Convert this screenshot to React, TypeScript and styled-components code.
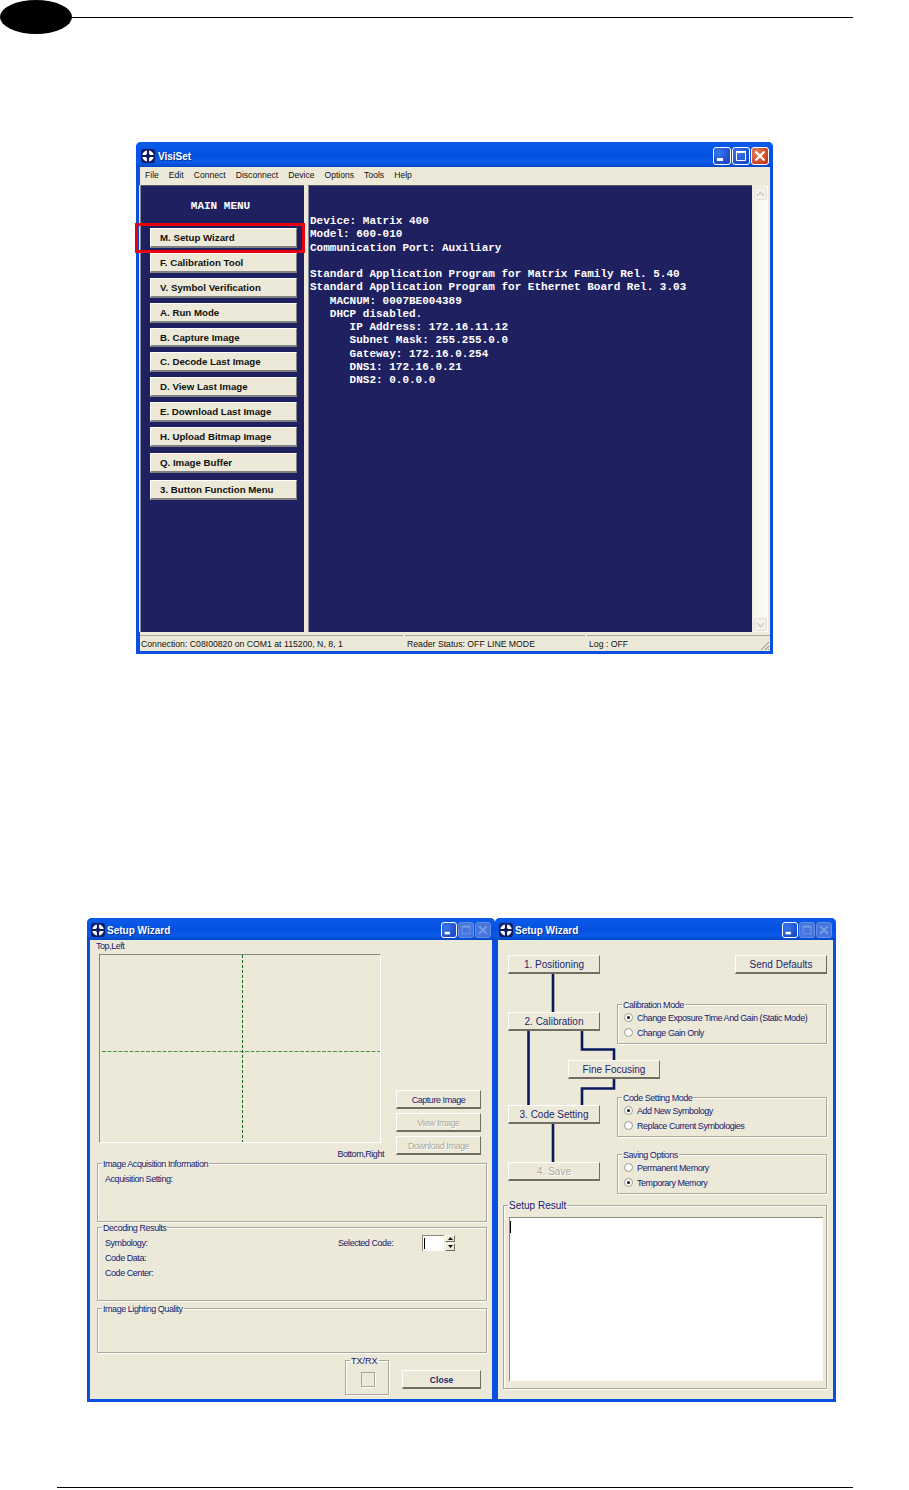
import React from "react";
import styled, { createGlobalStyle, css } from "styled-components";

const Global = createGlobalStyle`
  html, body { margin: 0; padding: 0; background: #fff; }
  body { font-family: "Liberation Sans", Arial, sans-serif; }
  * { box-sizing: border-box; }
`;

const Page = styled.div`
  width: 909px;
  height: 1490px;
  display: flex;
  flex-direction: column;
  overflow: hidden;
`;
const PageHeader = styled.header`
  display: flex;
  align-items: center;
  height: 34px;
  padding-right: 56px;
`;
const ChapterBlob = styled.div`
  width: 72px;
  height: 34px;
  border-radius: 50%;
  background: #000;
`;
const HeaderRule = styled.div`
  flex: 1;
  height: 1px;
  background: #000;
`;
const FooterRule = styled.div`
  margin: 85px 56px 0 57px;
  height: 1px;
  background: #000;
`;

const Window = styled.section<{ $w: number; $h: number }>`
  width: ${(p) => p.$w}px;
  height: ${(p) => p.$h}px;
  flex: none;
  display: flex;
  flex-direction: column;
  border-radius: 5px 5px 0 0;
  background: #0a50e0;
  padding: 0 3px 3px;
`;
const TitleBar = styled.div<{ $h: number; $compact?: boolean }>`
  height: ${(p) => p.$h}px;
  flex: none;
  margin: 0 -3px;
  padding: 2px 4px 0 ${(p) => (p.$compact ? 4 : 5)}px;
  display: flex;
  align-items: center;
  gap: ${(p) => (p.$compact ? 2 : 3)}px;
  border-radius: 5px 5px 0 0;
  background: linear-gradient(#0a5fe8 0%, #0a58e8 15%, #0550e0 55%, #0a5ce8 80%, #0246c8 100%);
  color: #fff;
  font-weight: 700;
  font-size: 10px;
`;
const TitleText = styled.span<{ $drop?: number }>`
  flex: 1;
  padding-top: ${(p) => p.$drop ?? 0}px;
  text-shadow: 1px 1px 0 #0a2f90;
`;
const Controls = styled.div`
  display: flex;
  gap: 1px;
`;
const CtlBtn = styled.div<{ $size: number; $kind: "blue" | "red" | "off" }>`
  width: ${(p) => p.$size}px;
  height: ${(p) => p.$size}px;
  border-radius: 3px;
  border: 1px solid #fff;
  display: flex;
  align-items: center;
  justify-content: center;
  ${(p) =>
    p.$kind === "blue" &&
    css`background: radial-gradient(circle at 30% 30%, #3a78f0, #1a48c8 80%);`}
  ${(p) =>
    p.$kind === "red" &&
    css`background: radial-gradient(circle at 30% 30%, #e88060, #c83a18 80%);`}
  ${(p) =>
    p.$kind === "off" &&
    css`background: #4d79dc; border-color: #6f95e6; opacity: 0.9;`}
`;

const Logo = ({ size }: { size: number }) => (
  <svg width={size} height={size} viewBox="0 0 14 14" style={{ flex: "none" }}>
    <rect width="14" height="14" rx="3" fill="#101c60" />
    <circle cx="7" cy="7" r="5.8" fill="#fff" />
    <path d="M7 0v14M0 7h14" stroke="#101c60" strokeWidth="2.2" />
    <circle cx="7" cy="7" r="2.2" fill="#101c60" />
  </svg>
);

const WinControls = ({ size, off }: { size: number; off?: boolean }) => (
  <Controls>
    <CtlBtn $size={size} $kind="blue">
      <svg width={size - 2} height={size - 2} viewBox="0 0 16 16">
        <rect x="3" y="10" width="6" height="3" fill="#fff" />
      </svg>
    </CtlBtn>
    <CtlBtn $size={size} $kind={off ? "off" : "blue"}>
      <svg width={size - 2} height={size - 2} viewBox="0 0 16 16">
        <path d="M3.5 4.5h9v8h-9z" fill="none" stroke={off ? "#84a4ea" : "#fff"} strokeWidth="1" />
        <rect x="3" y="3" width="10" height="2" fill={off ? "#84a4ea" : "#fff"} />
      </svg>
    </CtlBtn>
    <CtlBtn $size={size} $kind={off ? "off" : "red"}>
      <svg width={size - 2} height={size - 2} viewBox="0 0 16 16">
        <path d="M3.5 3.5l9 9M12.5 3.5l-9 9" stroke={off ? "#84a4ea" : "#fff"} strokeWidth="2.2" />
      </svg>
    </CtlBtn>
  </Controls>
);

/* main window */
const MainRow = styled.div`
  margin: 108px 0 0 136px;
`;
const MenuBar = styled.nav`
  height: 18px;
  flex: none;
  margin: 0 0 0 1px;
  padding: 0 0 2px 5px;
  background: #ece9d8;
  display: flex;
  align-items: center;
  gap: 10px;
  font-size: 8.6px;
  color: #111;
`;
const MainBody = styled.div`
  flex: 1;
  min-height: 0;
  display: flex;
  background: #ece9d8;
  padding: 0 3px 0 1px;
`;
const SidePanel = styled.aside`
  width: 164px;
  flex: none;
  background: #1f2060;
  border-top: 1px solid #55556a;
  border-left: 1px solid #8a8a90;
  padding: 13px 0 0 9px;
`;
const MainMenuTitle = styled.div`
  font-family: "Liberation Mono", monospace;
  font-weight: 700;
  font-size: 11px;
  line-height: 14px;
  color: #fff;
  text-align: center;
  white-space: nowrap;
  width: 147px;
  margin-left: -3px;
  margin-bottom: 15px;
`;
const SideButtons = styled.div`
  display: flex;
  flex-direction: column;
  gap: 5px;
  width: 147px;
`;
const SideBtn = styled.div<{ $extra?: number }>`
  position: relative;
  height: 19.9px;
  flex: none;
  margin-top: ${(p) => p.$extra ?? 0}px;
  padding-left: 9px;
  background: #ece9d8;
  border-top: 1px solid #fff;
  border-left: 1px solid #fff;
  border-right: 1px solid #808080;
  border-bottom: 2px solid #808080;
  color: #111;
  font-weight: 700;
  font-size: 9.7px;
  line-height: 17px;
  white-space: nowrap;
`;
const Highlight = styled.div`
  position: absolute;
  left: -16px;
  top: -6px;
  width: 170px;
  height: 30px;
  border: 3px solid #e8000c;
  pointer-events: none;
`;
const Splitter = styled.div`
  width: 4px;
  flex: none;
  background: #ece9d8;
`;
const Console = styled.pre`
  width: 444px;
  flex: none;
  margin: 0;
  background: #1f2060;
  border-top: 1px solid #55556a;
  border-left: 1px solid #8a8a90;
  padding: 29px 0 0 1px;
  color: #fff;
  font-family: "Liberation Mono", monospace;
  font-weight: 700;
  font-size: 11px;
  line-height: 13.25px;
`;
const ScrollBar = styled.div`
  width: 15px;
  flex: none;
  margin: 1px 0 0 1px;
  display: flex;
  flex-direction: column;
  justify-content: space-between;
  background: linear-gradient(90deg, #f4f3ec, #fdfdfa);
`;
const ScrollBtn = styled.div`
  height: 13px;
  margin: 1px;
  background: #f3f2ea;
  border: 1px solid #e2e0d6;
  border-radius: 2px;
  display: flex;
  align-items: center;
  justify-content: center;
`;
const StatusBar = styled.footer`
  height: 19px;
  flex: none;
  margin-left: 1px;
  padding-top: 3px;
  background: #ece9d8;
  display: flex;
  gap: 2px;
  position: relative;
  font-size: 8.7px;
  color: #111;
`;
const StatusCell = styled.div<{ $w: number }>`
  width: ${(p) => p.$w}px;
  flex: none;
  height: 15px;
  line-height: 17px;
  padding-left: ${(p) => (p.$w > 200 ? 1 : 2)}px;
  border-top: 1px solid #aca899;
  white-space: nowrap;
`;
const Grip = styled.svg`
  position: absolute;
  right: 0;
  bottom: 0;
`;

/* wizard dialogs */
const DialogRow = styled.div`
  display: flex;
  margin: 264px 0 0 87px;
`;
const Dialog = styled.div`
  flex: 1;
  min-height: 0;
  background: #ece9d8;
  color: #141a6e;
  font-size: 9px;
  letter-spacing: -0.45px;
  display: flex;
  flex-direction: column;
`;
const LeftDialog = styled(Dialog)`
  padding: 0 5px 0 7px;
`;
const CaptureRow = styled.div`
  display: flex;
  height: 217px;
  flex: none;
`;
const CaptureCol = styled.div`
  width: 285px;
  flex: none;
  margin-left: 2px;
  display: flex;
  flex-direction: column;
`;
const CornerLabel = styled.div<{ $end?: boolean }>`
  height: 12px;
  line-height: 12px;
  white-space: nowrap;
  ${(p) =>
    p.$end
      ? css`text-align: right; margin-top: 5px;`
      : css`margin-left: -3px; margin-bottom: 2px;`}
`;
const ImageBox = styled.div`
  position: relative;
  width: 282px;
  height: 189px;
  flex: none;
  border-top: 1px solid #8a8878;
  border-left: 1px solid #8a8878;
  border-right: 1px solid #fff;
  border-bottom: 1px solid #fff;
`;
const Crosshair = styled.svg`
  position: absolute;
  left: 0;
  top: 0;
`;
const ActionCol = styled.div`
  margin: auto 0 2px 12px;
  display: flex;
  flex-direction: column;
  gap: 4px;
`;
const DlgBtn = styled.div<{ $w: number; $off?: boolean; $fs?: number; $bold?: boolean }>`
  width: ${(p) => p.$w}px;
  height: 19px;
  flex: none;
  padding-top: 1px;
  background: #ece9d8;
  border-top: 1px solid #fff;
  border-left: 1px solid #fff;
  border-right: 1px solid #716f64;
  border-bottom: 2px solid #716f64;
  display: flex;
  align-items: center;
  justify-content: center;
  white-space: nowrap;
  font-size: ${(p) => p.$fs ?? 9}px;
  letter-spacing: ${(p) => (p.$fs ? "0" : "-0.45px")};
  font-weight: ${(p) => (p.$bold ? 700 : 400)};
  color: ${(p) => (p.$off ? "#aca899" : "#1c2470")};
  ${(p) => p.$off && css`text-shadow: 1px 1px 0 #fff;`}
`;
const Group = styled.fieldset<{ $h: number; $top?: number; $w?: number }>`
  height: ${(p) => p.$h}px;
  ${(p) => p.$w && css`width: ${p.$w}px;`}
  margin: ${(p) => p.$top ?? 0}px 0 0;
  padding: 0;
  min-width: 0;
  border: 1px solid #aca899;
  box-shadow: 1px 1px 0 #fff, inset 1px 1px 0 #fff;
  flex: none;
`;
const Legend = styled.legend<{ $fs?: number; $ml?: number }>`
  margin-left: ${(p) => p.$ml ?? 4}px;
  padding: 0 1px;
  height: 12px;
  line-height: 14px;
  font-size: ${(p) => p.$fs ?? 9}px;
  letter-spacing: ${(p) => (p.$fs ? "0" : "-0.45px")};
  white-space: nowrap;
`;
const InfoLine = styled.div`
  padding: 4px 0 0 7px;
  line-height: 12px;
`;
const DecodeGrid = styled.div`
  display: grid;
  grid-template-columns: 233px 84px auto;
  grid-auto-rows: 15px;
  align-items: center;
  padding: 2px 0 0 7px;
`;
const Spin = styled.div`
  display: flex;
  width: 33px;
  height: 16px;
`;
const SpinInput = styled.div`
  width: 22px;
  background: #fff;
  border-top: 1px solid #8a8878;
  border-left: 1px solid #8a8878;
  padding: 2px 0 0 1px;
  color: #000;
`;
const Caret = styled.div`
  width: 1px;
  height: 11px;
  background: #000;
`;
const SpinArrows = styled.div`
  width: 10px;
  margin-left: 1px;
  display: flex;
  flex-direction: column;
  gap: 1px;
`;
const SpinBtn = styled.div`
  flex: 1;
  background: #ece9d8;
  border: 1px solid #fff;
  border-right-color: #716f64;
  border-bottom-color: #716f64;
  display: flex;
  align-items: center;
  justify-content: center;
`;
const BottomRow = styled.div`
  display: flex;
  justify-content: flex-end;
  align-items: flex-end;
  gap: 13px;
  padding-right: 6px;
  margin-top: 1px;
`;
const TxBox = styled.div`
  width: 14px;
  height: 15px;
  margin: 6px 0 0 15px;
  border: 1px solid #aca899;
  box-shadow: 1px 1px 0 #fff;
`;
const CloseWrap = styled.div`
  margin-bottom: 6px;
`;

const RightDialog = styled(Dialog)`
  padding: 0 6px 0 10px;
`;
const WizardTop = styled.div`
  display: flex;
  height: 259px;
  flex: none;
  position: relative;
`;
const StepCol = styled.div`
  width: 109px;
  flex: none;
  padding-top: 15px;
  display: flex;
  flex-direction: column;
`;
const StepSlot = styled.div<{ $top?: number; $left?: number }>`
  margin: ${(p) => p.$top ?? 0}px 0 0 ${(p) => p.$left ?? 0}px;
  position: relative;
  z-index: 1;
`;
const Connectors = styled.svg`
  position: absolute;
  left: 0;
  top: 0;
`;
const OptionCol = styled.div`
  flex: 1;
  padding-top: 15px;
  display: flex;
  flex-direction: column;
`;
const SendRow = styled.div`
  display: flex;
  justify-content: flex-end;
  margin-bottom: 24px;
`;
const RadioLine = styled.div`
  display: flex;
  align-items: center;
  gap: 4px;
  height: 15px;
  padding-left: 6px;
  white-space: nowrap;
`;
const RadioDot = styled.span<{ $on?: boolean }>`
  width: 9px;
  height: 9px;
  flex: none;
  border-radius: 50%;
  border: 1px solid #9a9888;
  background: #fff;
  display: flex;
  align-items: center;
  justify-content: center;
  &::after {
    content: "";
    width: 3px;
    height: 3px;
    border-radius: 50%;
    background: ${(p) => (p.$on ? "#111" : "transparent")};
  }
`;
const ResultGroup = styled(Group)`
  margin-left: -5px;
  padding: 6px 3px 0 5px;
`;
const ResultBox = styled.div`
  height: 164px;
  background: #fff;
  border-top: 1px solid #8a8878;
  border-left: 1px solid #8a8878;
  padding: 3px 0 0 0;
`;
const ResultCaret = styled.div`
  width: 1px;
  height: 12px;
  background: #000;
`;

const menu = ["File", "Edit", "Connect", "Disconnect", "Device", "Options", "Tools", "Help"];
const sideButtons: [string, number?][] = [
  ["F. Calibration Tool"],
  ["V. Symbol Verification"],
  ["A. Run Mode"],
  ["B. Capture Image"],
  ["C. Decode Last Image"],
  ["D. View Last Image"],
  ["E. Download Last Image"],
  ["H. Upload Bitmap Image"],
  ["Q. Image Buffer", 1],
  ["3. Button Function Menu", 2],
];
const consoleText = `Device: Matrix 400
Model: 600-010
Communication Port: Auxiliary

Standard Application Program for Matrix Family Rel. 5.40
Standard Application Program for Ethernet Board Rel. 3.03
   MACNUM: 0007BE004389
   DHCP disabled.
      IP Address: 172.16.11.12
      Subnet Mask: 255.255.0.0
      Gateway: 172.16.0.254
      DNS1: 172.16.0.21
      DNS2: 0.0.0.0`;

const Chev = ({ up }: { up?: boolean }) => (
  <svg width="9" height="6" viewBox="0 0 9 6">
    <path d={up ? "M1 5l3.5-3.5L8 5" : "M1 1l3.5 3.5L8 1"} fill="none" stroke="#d2d0c4" strokeWidth="1.6" />
  </svg>
);
const Tri = ({ up }: { up?: boolean }) => (
  <svg width="5" height="3" viewBox="0 0 5 3">
    <path d={up ? "M2.5 0L5 3H0z" : "M0 0h5L2.5 3z"} fill="#111" />
  </svg>
);

const Option = ({ on, children }: { on?: boolean; children: React.ReactNode }) => (
  <RadioLine>
    <RadioDot $on={on} />
    <span>{children}</span>
  </RadioLine>
);

export default function App() {
  return (
    <Page>
      <Global />
      <PageHeader>
        <ChapterBlob />
        <HeaderRule />
      </PageHeader>

      <MainRow>
        <Window $w={637} $h={512}>
          <TitleBar $h={25}>
            <Logo size={14} />
            <TitleText $drop={2}>VisiSet</TitleText>
            <WinControls size={18} />
          </TitleBar>
          <MenuBar>
            {menu.map((m) => (
              <span key={m}>{m}</span>
            ))}
          </MenuBar>
          <MainBody>
            <SidePanel>
              <MainMenuTitle>MAIN MENU</MainMenuTitle>
              <SideButtons>
                <SideBtn>
                  M. Setup Wizard
                  <Highlight />
                </SideBtn>
                {sideButtons.map(([label, extra]) => (
                  <SideBtn key={label} $extra={extra}>
                    {label}
                  </SideBtn>
                ))}
              </SideButtons>
            </SidePanel>
            <Splitter />
            <Console>{consoleText}</Console>
            <ScrollBar>
              <ScrollBtn>
                <Chev up />
              </ScrollBtn>
              <ScrollBtn>
                <Chev />
              </ScrollBtn>
            </ScrollBar>
          </MainBody>
          <StatusBar>
            <StatusCell $w={263}>Connection: C08I00820 on COM1 at 115200, N, 8, 1</StatusCell>
            <StatusCell $w={180}>Reader Status: OFF LINE MODE</StatusCell>
            <StatusCell $w={183}>Log : OFF</StatusCell>
            <Grip width="12" height="12" viewBox="0 0 12 12">
              <path d="M11 3l-8 8M11 7l-4 4M11 10l-1 1" stroke="#aca899" strokeWidth="1.2" />
            </Grip>
          </StatusBar>
        </Window>
      </MainRow>

      <DialogRow>
        <Window $w={408} $h={484}>
          <TitleBar $h={22} $compact>
            <Logo size={14} />
            <TitleText>Setup Wizard</TitleText>
            <WinControls size={16} off />
          </TitleBar>
          <LeftDialog>
            <CaptureRow>
              <CaptureCol>
                <CornerLabel>Top,Left</CornerLabel>
                <ImageBox>
                  <Crosshair width="280" height="187" viewBox="0 0 280 187">
                    <path d="M2 96.5h278" stroke="#459a45" strokeWidth="1" strokeDasharray="4 1.5" />
                    <path d="M142.5 0v187" stroke="#106a20" strokeWidth="1" strokeDasharray="3 2" />
                  </Crosshair>
                </ImageBox>
                <CornerLabel $end>Bottom,Right</CornerLabel>
              </CaptureCol>
              <ActionCol>
                <DlgBtn $w={85}>Capture Image</DlgBtn>
                <DlgBtn $w={85} $off>View Image</DlgBtn>
                <DlgBtn $w={85} $off>Download Image</DlgBtn>
              </ActionCol>
            </CaptureRow>
            <Group $h={65}>
              <Legend>Image Acquisition Information</Legend>
              <InfoLine>Acquisition Setting:</InfoLine>
            </Group>
            <Group $h={80} $top={-1}>
              <Legend>Decoding Results</Legend>
              <DecodeGrid>
                <span>Symbology:</span>
                <span>Selected Code:</span>
                <Spin>
                  <SpinInput>
                    <Caret />
                  </SpinInput>
                  <SpinArrows>
                    <SpinBtn>
                      <Tri up />
                    </SpinBtn>
                    <SpinBtn>
                      <Tri />
                    </SpinBtn>
                  </SpinArrows>
                </Spin>
                <span>Code Data:</span>
                <span />
                <span />
                <span>Code Center:</span>
              </DecodeGrid>
            </Group>
            <Group $h={51} $top={1}>
              <Legend>Image Lighting Quality</Legend>
            </Group>
            <BottomRow>
              <Group $h={41} $w={44}>
                <Legend $fs={9}>TX/RX</Legend>
                <TxBox />
              </Group>
              <CloseWrap>
                <DlgBtn $w={79} $bold $fs={8.6}>Close</DlgBtn>
              </CloseWrap>
            </BottomRow>
          </LeftDialog>
        </Window>

        <Window $w={341} $h={484}>
          <TitleBar $h={22} $compact>
            <Logo size={14} />
            <TitleText>Setup Wizard</TitleText>
            <WinControls size={16} off />
          </TitleBar>
          <RightDialog>
            <WizardTop>
              <Connectors width="160" height="259" viewBox="0 0 160 259">
                <g fill="none" stroke="#0a1a60" strokeWidth="2.6">
                  <path d="M45 33v40" />
                  <path d="M20.5 90v76" />
                  <path d="M74 90v19.5h32V121" />
                  <path d="M106 139v9.5H74V166" />
                  <path d="M45 183v40" />
                </g>
              </Connectors>
              <StepCol>
                <StepSlot>
                  <DlgBtn $w={92} $fs={10}>1. Positioning</DlgBtn>
                </StepSlot>
                <StepSlot $top={38}>
                  <DlgBtn $w={92} $fs={10}>2. Calibration</DlgBtn>
                </StepSlot>
                <StepSlot $top={29} $left={60}>
                  <DlgBtn $w={92} $fs={10}>Fine Focusing</DlgBtn>
                </StepSlot>
                <StepSlot $top={26}>
                  <DlgBtn $w={92} $fs={10}>3. Code Setting</DlgBtn>
                </StepSlot>
                <StepSlot $top={38}>
                  <DlgBtn $w={92} $fs={10} $off>4. Save</DlgBtn>
                </StepSlot>
              </StepCol>
              <OptionCol>
                <SendRow>
                  <DlgBtn $w={92} $fs={10}>Send Defaults</DlgBtn>
                </SendRow>
                <Group $h={46}>
                  <Legend>Calibration Mode</Legend>
                  <Option on>Change Exposure Time And Gain (Static Mode)</Option>
                  <Option>Change Gain Only</Option>
                </Group>
                <Group $h={46} $top={47}>
                  <Legend>Code Setting Mode</Legend>
                  <Option on>Add New Symbology</Option>
                  <Option>Replace Current Symbologies</Option>
                </Group>
                <Group $h={46} $top={11}>
                  <Legend>Saving Options</Legend>
                  <Option>Permanent Memory</Option>
                  <Option on>Temporary Memory</Option>
                </Group>
              </OptionCol>
            </WizardTop>
            <ResultGroup $h={190}>
              <Legend $fs={10} $ml={-1}>Setup Result</Legend>
              <ResultBox>
                <ResultCaret />
              </ResultBox>
            </ResultGroup>
          </RightDialog>
        </Window>
      </DialogRow>

      <FooterRule />
    </Page>
  );
}
